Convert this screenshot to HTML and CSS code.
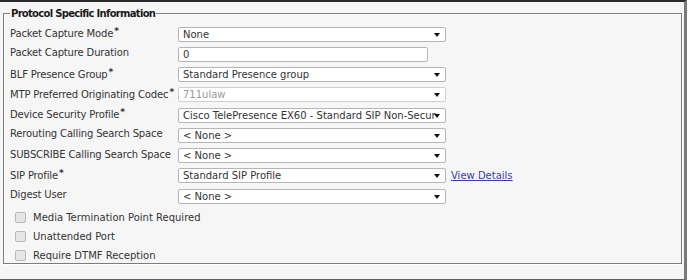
FILE: index.html
```html
<!doctype html>
<html lang="en">
    <head>
        <meta charset="UTF-8" />
        <title>Protocol Specific Information</title>
        <link rel="stylesheet" href="styles.css">
    </head>
    <body>
        <div class="shot">
            <fieldset class="group">
                <legend>Protocol Specific Information</legend>

                <div class="row">
                    <span class="label">Packet Capture Mode<b class="req">*</b></span>
                    <div class="select">None</div>
                </div>
                <div class="row">
                    <span class="label">Packet Capture Duration</span>
                    <div class="input">0</div>
                </div>
                <div class="row">
                    <span class="label">BLF Presence Group<b class="req">*</b></span>
                    <div class="select">Standard Presence group</div>
                </div>
                <div class="row">
                    <span class="label">MTP Preferred Originating Codec<b class="req">*</b></span>
                    <div class="select disabled">711ulaw</div>
                </div>
                <div class="row">
                    <span class="label">Device Security Profile<b class="req">*</b></span>
                    <div class="select">Cisco TelePresence EX60 - Standard SIP Non-Secur</div>
                </div>
                <div class="row">
                    <span class="label">Rerouting Calling Search Space</span>
                    <div class="select">&lt; None &gt;</div>
                </div>
                <div class="row">
                    <span class="label">SUBSCRIBE Calling Search Space</span>
                    <div class="select">&lt; None &gt;</div>
                </div>
                <div class="row">
                    <span class="label">SIP Profile<b class="req">*</b></span>
                    <div class="select">Standard SIP Profile</div>
                    <a class="details" href="#">View Details</a>
                </div>
                <div class="row">
                    <span class="label">Digest User</span>
                    <div class="select">&lt; None &gt;</div>
                </div>

                <div class="checks">
                    <label class="check"><span class="box"></span>Media Termination Point Required</label>
                    <label class="check"><span class="box"></span>Unattended Port</label>
                    <label class="check"><span class="box"></span>Require DTMF Reception</label>
                </div>
            </fieldset>
        </div>
    </body>
</html>
```

FILE: styles.css
```css
body {
    margin: 0;
    background-color: #ffffff;
    font-family: "DejaVu Sans", Verdana, sans-serif;
    font-size: 10px;
    color: #333333;
}

.shot {
    width: 684px;
    height: 271px;
    background-color: #f6f6f6;
    border-top: 2px solid #2b2b2b;
    border-right: 3px solid #7a7a7a;
    border-bottom: 3px solid #5e5e5e;
    padding-top: 6px;
    box-sizing: content-box;
}

.group {
    margin: 0 0 0 3px;
    width: 679px;
    height: 256px;
    box-sizing: border-box;
    padding: 5px 6px 0 6px;
    border: 1px solid #7c7c7c;
    box-shadow: inset 1px 1px 0 #ffffff, 1px 1px 0 #ffffff;
}

.group legend {
    padding: 0 1px;
    font-weight: bold;
    color: #1a1a1a;
    font-size: 10px;
    letter-spacing: -0.7px;
}

.row {
    display: flex;
    align-items: center;
    height: 20.25px;
}

.label {
    width: 168px;
    flex: none;
    padding-bottom: 3px;
    white-space: nowrap;
    letter-spacing: -0.15px;
}

.req {
    font-size: 9px;
    vertical-align: 3px;
    margin-left: 1px;
}

.select,
.input {
    height: 15px;
    box-sizing: border-box;
    background-color: #ffffff;
    border: 1px solid #b5b5b5;
    border-radius: 2px;
    padding: 0 4px;
    line-height: 13px;
    white-space: nowrap;
    overflow: hidden;
}

.select {
    width: 268px;
    position: relative;
    padding-right: 12px;
}

.select::after {
    content: "";
    position: absolute;
    right: 5px;
    top: 5px;
    border-left: 3px solid transparent;
    border-right: 3px solid transparent;
    border-top: 4px solid #111111;
}

.select.disabled {
    color: #9a9a9a;
    border-color: #d0d0d0;
}

.input {
    width: 250px;
}

.details {
    margin-left: 5px;
    color: #3b3bb0;
    text-decoration: underline;
}

.checks {
    padding-top: 2px;
}

.check {
    display: flex;
    align-items: center;
    height: 19px;
    padding-left: 5px;
}

.check .box {
    width: 9px;
    height: 9px;
    border: 1px solid #b8b8b8;
    border-radius: 2px;
    background-color: #e6e6e6;
    margin-right: 7px;
}
```
